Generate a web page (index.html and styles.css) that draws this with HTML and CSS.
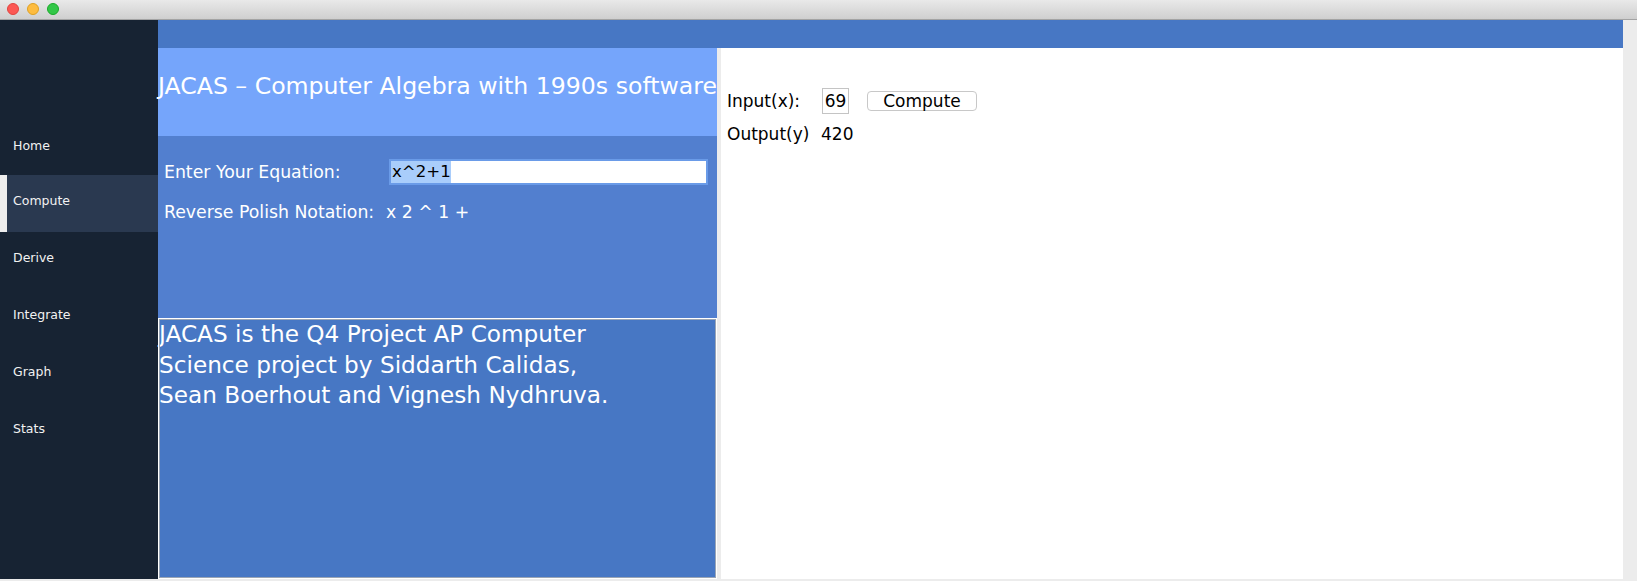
FILE: index.html
```html
<!DOCTYPE html>
<html lang="en">
<head>
<meta charset="utf-8">
<title>JACAS</title>
<link rel="stylesheet" href="styles.css">
</head>
<body>
<div class="titlebar">
  <span class="light light-red"></span>
  <span class="light light-yellow"></span>
  <span class="light light-green"></span>
</div>
<div class="window">
  <nav class="sidebar">
    <div class="nav-item nav-home">Home</div>
    <div class="nav-item nav-active">Compute</div>
    <div class="nav-item">Derive</div>
    <div class="nav-item">Integrate</div>
    <div class="nav-item">Graph</div>
    <div class="nav-item">Stats</div>
  </nav>
  <div class="main">
    <div class="topbar"></div>
    <div class="content">
      <section class="left">
        <h1 class="heading">JACAS – Computer Algebra with 1990s software</h1>
        <div class="form">
          <div class="form-row">
            <span class="form-label">Enter Your Equation:</span>
            <div class="equation"><span class="selected">x^2+1</span></div>
          </div>
          <div class="form-row rpn-row">
            <span class="form-label rpn-label">Reverse Polish Notation:</span>
            <span>x 2 ^ 1 +</span>
          </div>
        </div>
        <div class="about">JACAS is the Q4 Project AP Computer<br>Science project by Siddarth Calidas,<br>Sean Boerhout and Vignesh Nydhruva.</div>
      </section>
      <section class="right">
        <div class="io-row">
          <span class="io-label">Input(x):</span>
          <span class="io-input">69</span>
          <span class="io-button">Compute</span>
        </div>
        <div class="io-row output-row">
          <span class="io-label output-label">Output(y)</span>
          <span>420</span>
        </div>
      </section>
    </div>
  </div>
</div>
</body>
</html>
```
FILE: styles.css
```css
* { box-sizing: border-box; }
html, body { margin: 0; height: 581px; overflow: hidden; }
body { background: #ececec; font-family: "DejaVu Sans", Verdana, sans-serif; }

.titlebar {
  height: 20px;
  display: flex;
  align-items: center;
  gap: 8px;
  padding: 0 0 1px 7px;
  background: linear-gradient(#e9e9e9, #cfcfcf);
  border-bottom: 1px solid #a3a3a3;
}
.light { width: 12px; height: 12px; border-radius: 50%; }
.light-red { background: #fc5753; border: 1px solid #e0443e; }
.light-yellow { background: #fdbc40; border: 1px solid #dea123; }
.light-green { background: #33c748; border: 1px solid #1aab29; }

.window { display: flex; height: 559px; }

.sidebar { width: 158px; padding-top: 98px; background: #172333; color: #f2f2f2; font-size: 12.5px; }
.nav-item { height: 57px; display: flex; align-items: center; padding: 0 0 6px 13px; }
.nav-home { padding-bottom: 2px; }
.nav-active { padding-left: 6px; background: #2a3950; border-left: 7px solid #eeeeee; }

.main { width: 1465px; display: flex; flex-direction: column; }
.topbar { height: 28px; background: #4777c4; }
.content { flex: 1; display: flex; }

.left { width: 559px; display: flex; flex-direction: column; color: #fff; }
.heading {
  height: 88px;
  margin: 0;
  display: flex;
  align-items: center;
  padding-bottom: 13px;
  background: #75a5fb;
  font-size: 23.6px;
  font-weight: 400;
  white-space: nowrap;
}
.form { height: 182px; padding: 24px 0 0 6px; background: #527fcf; font-size: 17.3px; }
.form-row { display: flex; align-items: center; height: 24px; }
.rpn-row { margin-top: 16px; }
.form-label { width: 225px; }
.rpn-label { width: 222px; }
.equation {
  width: 319px;
  height: 26px;
  background: #fff;
  border: 2px solid #6a9be8;
  color: #000;
  font-size: 16.6px;
  line-height: 22px;
}
.selected { display: inline-block; height: 22px; padding-left: 1px; background: #a9cdfb; }
.about {
  flex: 1;
  background: #4777c4;
  border: 1px solid #fff;
  outline: 1px solid #9aa5b5;
  outline-offset: -2px;
  font-size: 23.2px;
  line-height: 30.5px;
}

.right { flex: 1; margin-left: 4px; padding: 40px 0 0 6px; background: #fff; color: #000; font-size: 17px; }
.io-row { display: flex; align-items: center; height: 25px; }
.output-row { margin-top: 8px; }
.io-label { width: 95px; }
.output-label { width: 94px; }
.io-input { width: 27px; height: 26px; display: flex; align-items: center; justify-content: center; border: 1px solid #c4c4c4; }
.io-button {
  width: 110px;
  height: 20px;
  margin-left: 18px;
  display: flex;
  align-items: center;
  justify-content: center;
  background: #fff;
  border: 1px solid #c8c8c8;
  border-radius: 4px;
}
```
